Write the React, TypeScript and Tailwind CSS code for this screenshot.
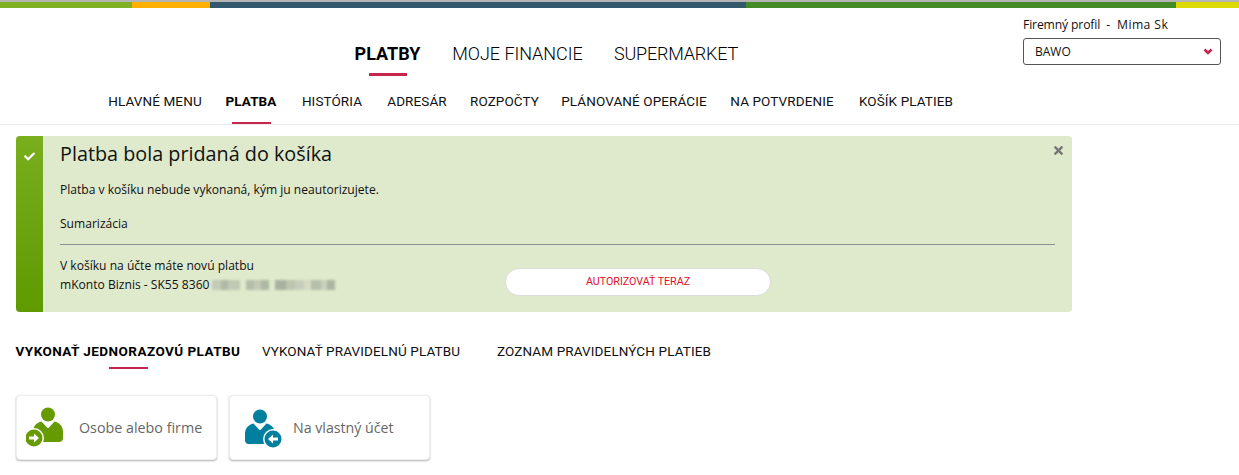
import { FaCheck, FaTimes } from "react-icons/fa";

const headFont = "font-['Roboto',sans-serif]";

const mainMenu = [
  { label: "PLATBY", width: "w-[67px]", className: "font-bold" },
  { label: "MOJE FINANCIE", width: "w-[130px]", className: "font-light tracking-[-0.05px] -ml-[1px]" },
  { label: "SUPERMARKET", width: "w-[123px]", className: "font-light tracking-[-0.2px] -ml-[1px]" },
];

const subMenu = [
  { label: "HLAVNÉ MENU", width: "w-[92px]" },
  { label: "PLATBA", width: "w-[52px]", active: true },
  { label: "HISTÓRIA", width: "w-[62px]" },
  { label: "ADRESÁR", width: "w-[60px]" },
  { label: "ROZPOČTY", width: "w-[67px]" },
  { label: "PLÁNOVANÉ OPERÁCIE", width: "w-[144px]" },
  { label: "NA POTVRDENIE", width: "w-[104px]" },
  { label: "KOŠÍK PLATIEB", width: "w-[96px]" },
];

// masked part of the account number
const blurGroups = [
  ["w-[9px] bg-[#c3ccb6]", "w-[7px] bg-[#b0baa6]", "w-[12px] bg-[#c0c9b3]"],
  ["w-[8px] bg-[#b4beaa]", "w-[7px] bg-[#c2cab5]", "w-[8px] bg-[#aeb8a4]"],
  ["w-[11px] bg-[#a8b29f]", "w-[9px] bg-[#bcc5b0]", "w-[9px] bg-[#c6cebb]", "w-[7px] bg-[#d4dcc4]", "w-[10px] bg-[#b6bfab]", "w-[6px] bg-[#c8d0bb]", "w-[8px] bg-[#abb5a2]"],
];

function PersonIcon({ color, direction }: { color: string; direction: "in" | "out" }) {
  const out = direction === "out";
  const badgeX = out ? 8 : 28;
  const badgeY = out ? 31 : 32;
  return (
    <svg width="38" height="42" viewBox="0 0 38 42" className="shrink-0">
      <g fill={color} transform={`translate(${out ? 7 : 0} ${out ? 0 : 2})`}>
        <circle cx="15" cy="7.5" r="7" />
        <path d="M8.5 14.5 L14.5 21 L15.5 21 L21.5 14.5 C26.5 15.5 29.5 19 30 24 L30 31 C30 33.5 28.5 35 26 35 L4 35 C1.5 35 0 33.5 0 31 L0 24 C0.5 19 3.5 15.5 8.5 14.5 Z" />
      </g>
      <circle cx={badgeX} cy={badgeY} r="10" fill="#fff" />
      <circle cx={badgeX} cy={badgeY} r="8.5" fill={color} />
      {out ? (
        <path d={`M${badgeX - 5} ${badgeY - 1.6} H${badgeX} V${badgeY - 4.5} L${badgeX + 5} ${badgeY} L${badgeX} ${badgeY + 4.5} V${badgeY + 1.6} H${badgeX - 5} Z`} fill="#fff" />
      ) : (
        <path d={`M${badgeX + 5} ${badgeY - 1.6} H${badgeX} V${badgeY - 4.5} L${badgeX - 5} ${badgeY} L${badgeX} ${badgeY + 4.5} V${badgeY + 1.6} H${badgeX + 5} Z`} fill="#fff" />
      )}
    </svg>
  );
}

export default function App() {
  return (
    <div className="w-[1239px] h-[475px] overflow-hidden bg-white text-[#111] font-['Open_Sans',sans-serif]">
      <div className="h-[3px] bg-[#b5b5b5] -mb-px" />
      <div className="flex h-[6px]">
        <div className="w-[132px] bg-[#7fb024]" />
        <div className="w-[78px] bg-[#fdb000]" />
        <div className="w-[536px] bg-[#34586e]" />
        <div className="w-[430px] bg-[#448a26]" />
        <div className="flex-1 bg-[#dcd900]" />
      </div>

      <header className="h-[117px] border-b border-[#ebebeb]">
        <div className="flex h-[68px]">
          <nav className={`flex gap-[32px] pl-[354px] pt-[34px] ${headFont}`}>
            {mainMenu.map((item) => (
              <div key={item.label} className={`${item.width} flex flex-col items-center`}>
                <span className={`whitespace-nowrap text-[18px] leading-[24px] text-black ${item.className}`}>
                  {item.label}
                </span>
                {item.label === "PLATBY" && <span className="mt-[7px] h-[3px] w-[38px] bg-[#c7254e]" />}
              </div>
            ))}
          </nav>
          <div className="ml-auto mr-[18px] w-[198px] pt-[8px]">
            <div className="flex text-[12.2px] leading-[18px] whitespace-nowrap">
              <span className="tracking-[-0.15px]">Firemný profil</span>
              <span className="ml-[6px]">-</span>
              <span className="ml-[7px] tracking-[0.4px]">Mima Sk</span>
            </div>
            <div className="mt-[4px] flex h-[27px] items-center justify-between rounded-[3px] border border-[#555] pl-[11px] pr-[7px] text-[12px]">
              <span>BAWO</span>
              <svg width="10" height="8" viewBox="0 0 10 8" className="mt-[1px]">
                <path d="M1.5 1.5 L5 5 L8.5 1.5" fill="none" stroke="#c7254e" strokeWidth="2.6" />
              </svg>
            </div>
          </div>
        </div>
        <nav className={`flex gap-[24px] pl-[109px] ${headFont}`}>
          {subMenu.map((item) => (
            <div key={item.label} className={`${item.width} relative flex h-[48px] flex-col items-center pt-[16px]`}>
              <span className={`whitespace-nowrap text-[13.5px] leading-[18px] ${item.active ? "font-bold tracking-[0.1px] text-black" : "tracking-[0.1px] text-[#111]"}`}>
                {item.label}
              </span>
              {item.active && <span className="absolute bottom-0 h-[2px] w-[39px] bg-[#c7254e]" />}
            </div>
          ))}
        </nav>
      </header>

      <div className="mx-[16px] mt-[11px] flex h-[176px] w-[1056px] overflow-hidden rounded-[4px] bg-[#dfe9cb]">
        <div className="flex w-[27px] shrink-0 justify-center bg-gradient-to-b from-[#79ae1c] to-[#5f9a00] pt-[15px]">
          <FaCheck className="text-[11px] text-white" />
        </div>
        <div className="relative flex-1 pl-[17px] pr-[17px]">
          <FaTimes className="absolute right-[7px] top-[8px] text-[13px] text-[#777]" />
          <h2 className="pt-[4px] text-[19.8px] leading-[27px]">Platba bola pridaná do košíka</h2>
          <p className="mt-[14px] text-[12.08px] leading-[18px]">Platba v košíku nebude vykonaná, kým ju neautorizujete.</p>
          <p className="mt-[16px] text-[12.08px] leading-[18px]">Sumarizácia</p>
          <div className="mt-[11px] h-px bg-[#8f8f94]" />
          <div className="flex">
            <div className="w-[445px] pt-[11px] text-[12.08px] leading-[19px]">
              <div>V košíku na účte máte novú platbu</div>
              <div className="flex items-center">
                <span>mKonto Biznis - SK55 8360</span>
                <span className="ml-[3px] flex h-[10px] gap-[6px] blur-[1px]">
                  {blurGroups.map((group, i) => (
                    <span key={i} className="flex">
                      {group.map((block, j) => (
                        <span key={j} className={block} />
                      ))}
                    </span>
                  ))}
                </span>
              </div>
            </div>
            <button className={`mt-[23px] h-[28px] w-[266px] rounded-full border border-[#dcdcdc] bg-white text-[10.7px] text-[#e30e2d] ${headFont}`}>
              AUTORIZOVAŤ TERAZ
            </button>
          </div>
        </div>
      </div>

      <div className={`mt-[28px] flex pl-[16px] text-[13.5px] leading-[22px] ${headFont}`}>
        <div className="flex w-[224px] flex-col items-center">
          <span className="whitespace-nowrap font-bold tracking-[0.45px] text-black">VYKONAŤ JEDNORAZOVÚ PLATBU</span>
          <span className="mt-[5px] h-[2px] w-[39px] bg-[#c7254e]" />
        </div>
        <span className="ml-[22px] w-[198px] whitespace-nowrap tracking-[0.12px]">VYKONAŤ PRAVIDELNÚ PLATBU</span>
        <span className="ml-[37px] whitespace-nowrap tracking-[0.12px]">ZOZNAM PRAVIDELNÝCH PLATIEB</span>
      </div>

      <div className="mt-[26px] flex gap-[12px] pl-[16px]">
        <div className="flex h-[65px] w-[201px] items-center rounded-[4px] border border-[#eee] bg-white pl-[9px] shadow-[0_1px_2px_rgba(0,0,0,0.3)]">
          <PersonIcon color="#659b00" direction="out" />
          <span className="ml-[15px] whitespace-nowrap text-[14.3px] text-[#666]">Osobe alebo firme</span>
        </div>
        <div className="flex h-[65px] w-[201px] items-center rounded-[4px] border border-[#eee] bg-white pl-[15px] shadow-[0_1px_2px_rgba(0,0,0,0.3)]">
          <PersonIcon color="#007f9e" direction="in" />
          <span className="ml-[10px] whitespace-nowrap text-[14.2px] text-[#666]">Na vlastný účet</span>
        </div>
      </div>
    </div>
  );
}
